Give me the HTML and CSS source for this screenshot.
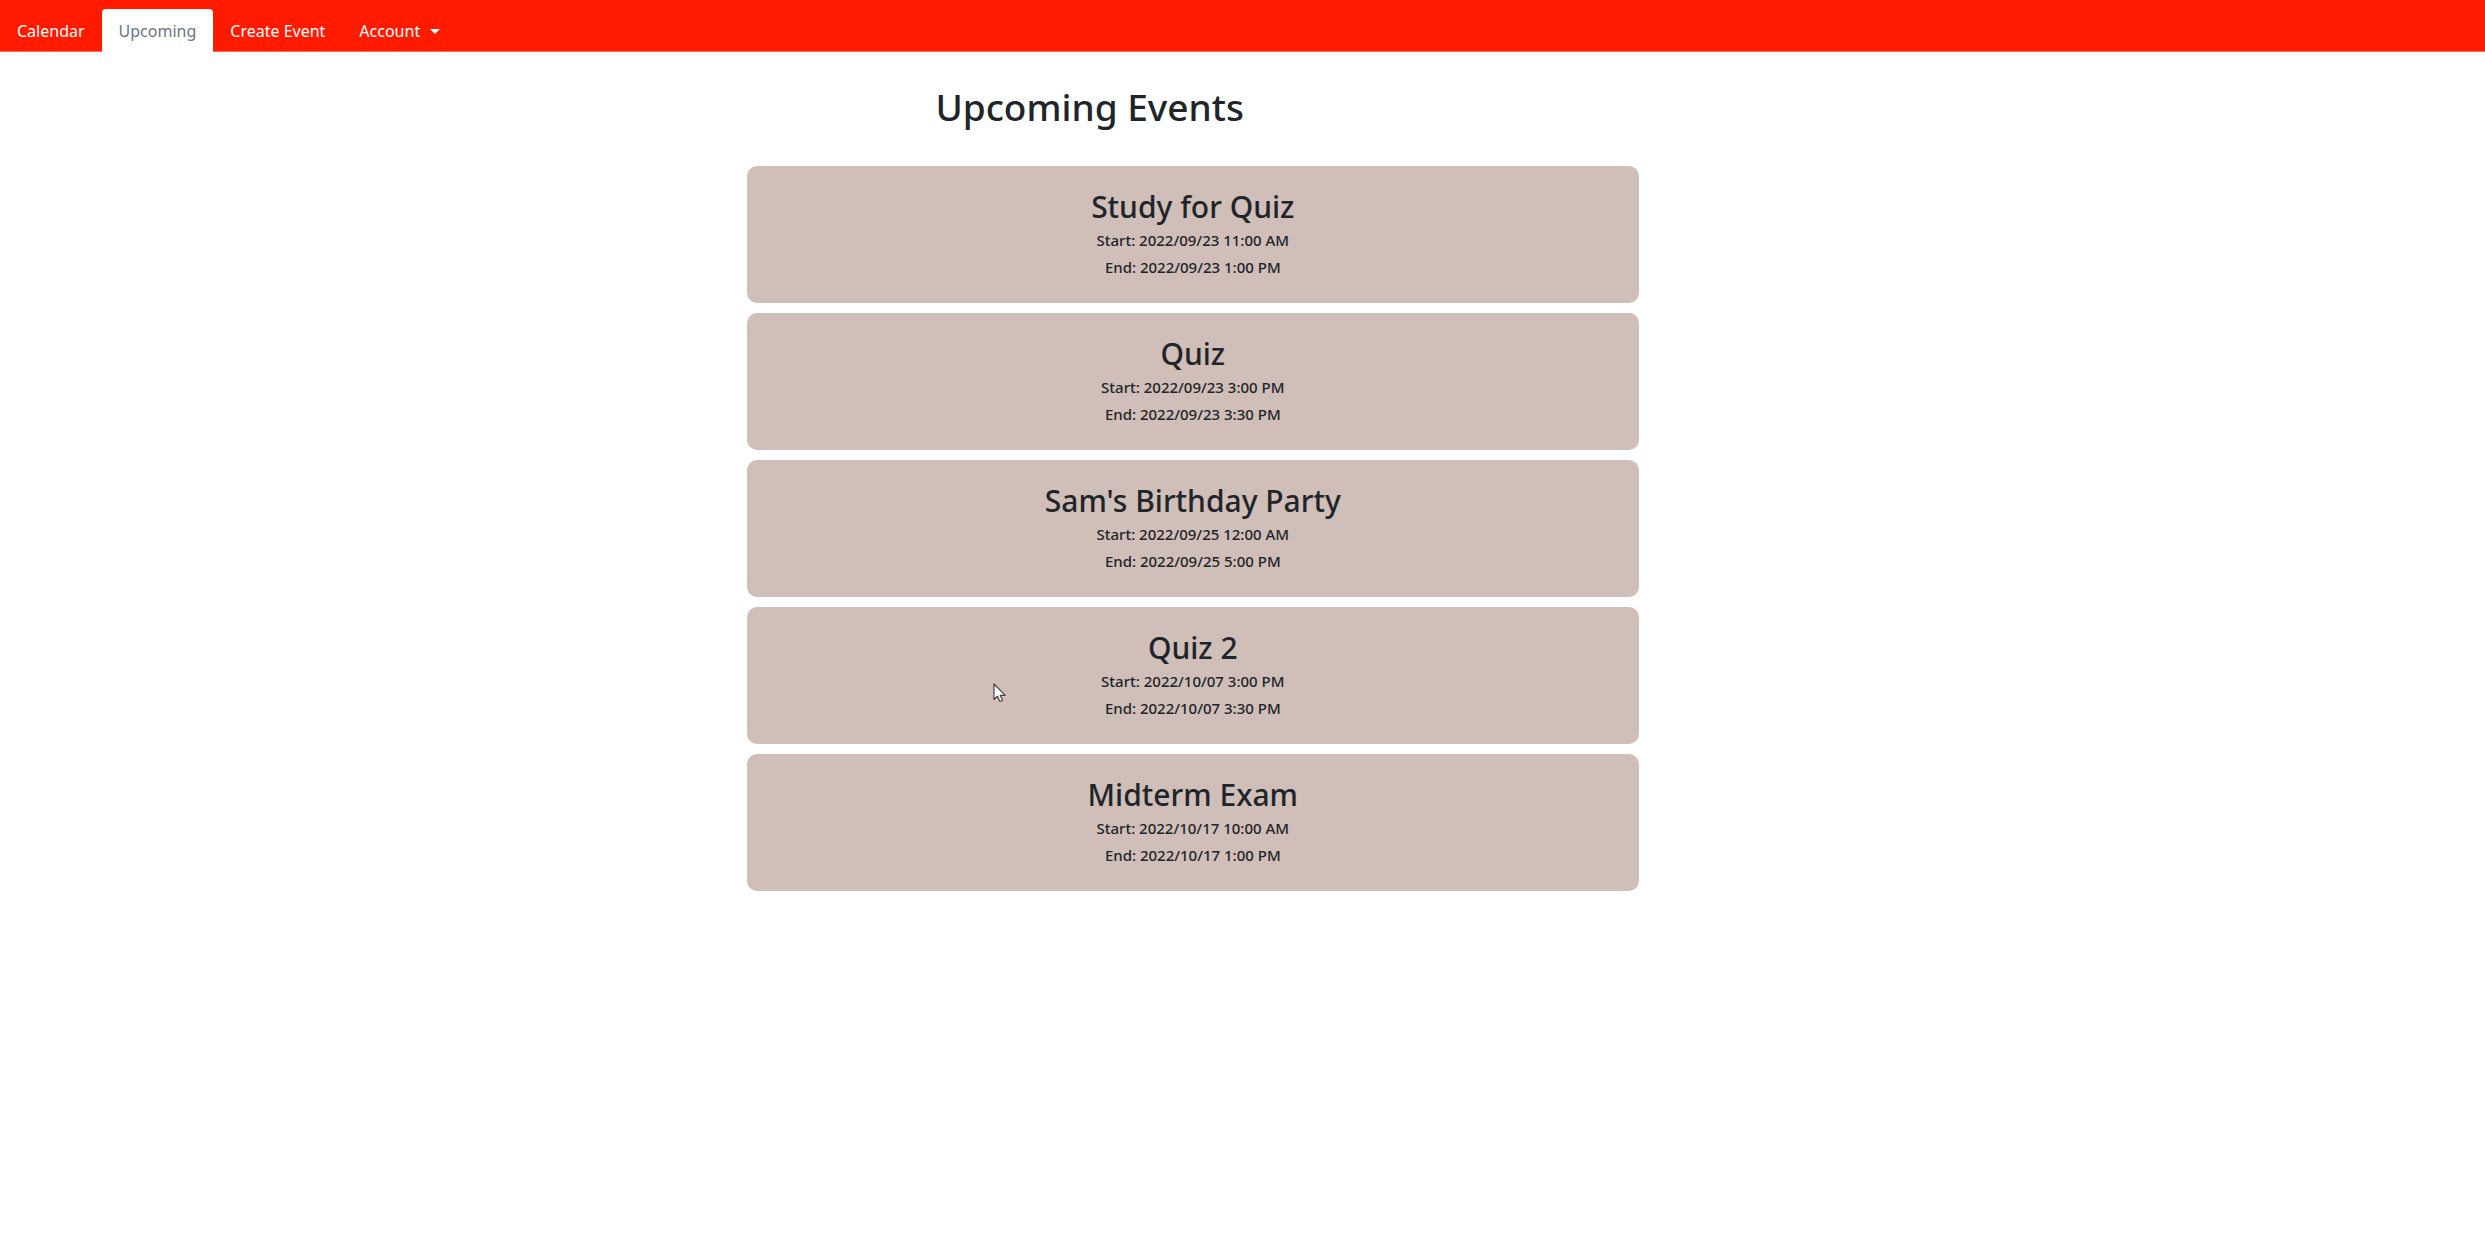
FILE: index.html
```html
<!DOCTYPE html>
<html lang="en">
<head>
<meta charset="utf-8">
<meta name="viewport" content="width=device-width, initial-scale=1">
<title>Upcoming Events</title>
<link rel="stylesheet" href="styles.css">
</head>
<body>
<nav class="tabs" aria-label="Main">
  <a class="tab" href="#calendar">Calendar</a>
  <a class="tab tab-active" href="#upcoming" aria-current="page">Upcoming</a>
  <a class="tab" href="#create">Create Event</a>
  <button class="tab tab-menu" type="button" aria-haspopup="true">Account</button>
</nav>
<main>
  <h1 class="page-title">Upcoming Events</h1>
  <section class="events">
    <article class="event">
      <h2 class="event-title">Study for Quiz</h2>
      <p class="event-time">Start: 2022/09/23 11:00 AM</p>
      <p class="event-time">End: 2022/09/23 1:00 PM</p>
    </article>
    <article class="event">
      <h2 class="event-title">Quiz</h2>
      <p class="event-time">Start: 2022/09/23 3:00 PM</p>
      <p class="event-time">End: 2022/09/23 3:30 PM</p>
    </article>
    <article class="event">
      <h2 class="event-title">Sam's Birthday Party</h2>
      <p class="event-time">Start: 2022/09/25 12:00 AM</p>
      <p class="event-time">End: 2022/09/25 5:00 PM</p>
    </article>
    <article class="event">
      <h2 class="event-title">Quiz 2</h2>
      <p class="event-time">Start: 2022/10/07 3:00 PM</p>
      <p class="event-time">End: 2022/10/07 3:30 PM</p>
    </article>
    <article class="event">
      <h2 class="event-title">Midterm Exam</h2>
      <p class="event-time">Start: 2022/10/17 10:00 AM</p>
      <p class="event-time">End: 2022/10/17 1:00 PM</p>
    </article>
  </section>
</main>
<svg class="pointer" width="14" height="20" viewBox="0 0 14 20" aria-hidden="true">
  <path d="M1 1v15.500l3.500-3.200 2.400 5.200 2.600-1.200-2.300-5h5z" fill="#fff" stroke="#4a4040" stroke-width="1.200" stroke-linejoin="round"/>
</svg>
</body>
</html>
```
FILE: styles.css
```css
* {
  box-sizing: border-box;
}

body {
  margin: 0;
  background: #fff;
  color: #212529;
  font-family: "Segoe UI", "Noto Sans", sans-serif;
  font-size: 16px;
}

.tabs {
  display: flex;
  padding-top: 9px;
  background: #ff1a00;
  border-bottom: 1px solid #ff6a58;
}

.tab {
  margin-bottom: -1px;
  padding: 9px 17px 8px;
  border: 0;
  border-radius: 4px 4px 0 0;
  background: none;
  color: #fff;
  font: inherit;
  line-height: 26px;
  text-decoration: none;
  white-space: nowrap;
}

.tab-active {
  background: #fff;
  color: #6c757d;
}

.tab-menu {
  display: flex;
  align-items: center;
  gap: 10px;
}

.tab-menu::after {
  content: "";
  border: 5px solid transparent;
  border-top-color: #fff;
  border-bottom: 0;
}

.page-title {
  margin: 28px 12.3% 33px 0;
  font-size: 37px;
  font-weight: 500;
  line-height: 53px;
  text-align: center;
}

.events {
  display: grid;
  gap: 10px;
  width: 35.9%;
  margin-left: 30.05%;
}

.event {
  padding: 20px 20px 22px;
  border-radius: 10px;
  background: #d0beb8;
  text-align: center;
}

.event-title {
  margin: 0;
  font-size: 30px;
  font-weight: 500;
  line-height: 41px;
}

.event-time {
  margin: 0;
  font-size: 15px;
  font-weight: 500;
  line-height: 27px;
}

.pointer {
  position: absolute;
  top: 683px;
  left: 993px;
}
```
